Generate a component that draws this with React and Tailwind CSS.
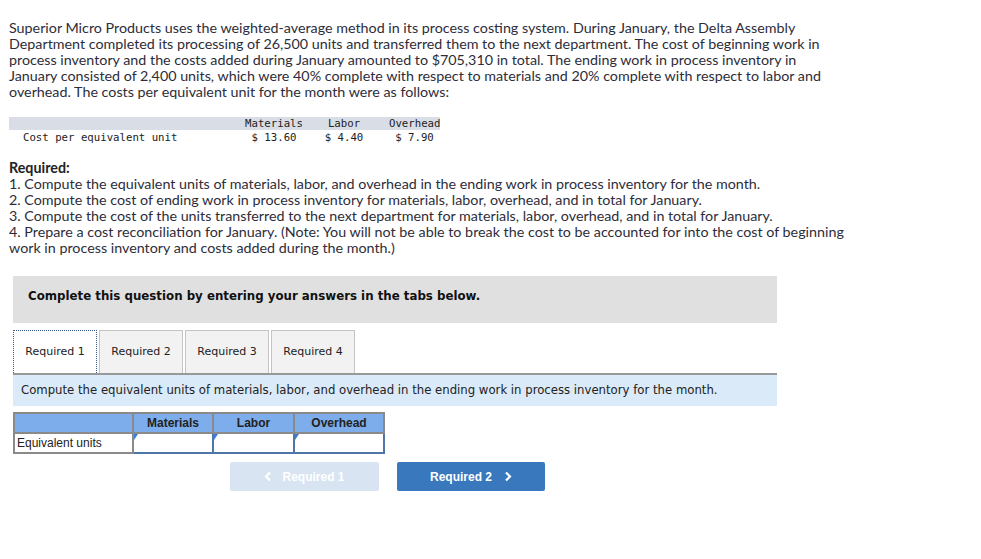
import React from "react";

const paraLines = [
  "Superior Micro Products uses the weighted-average method in its process costing system. During January, the Delta Assembly",
  "Department completed its processing of 26,500 units and transferred them to the next department. The cost of beginning work in",
  "process inventory and the costs added during January amounted to $705,310 in total. The ending work in process inventory in",
  "January consisted of 2,400 units, which were 40% complete with respect to materials and 20% complete with respect to labor and",
  "overhead. The costs per equivalent unit for the month were as follows:",
];

const reqLines = [
  "1. Compute the equivalent units of materials, labor, and overhead in the ending work in process inventory for the month.",
  "2. Compute the cost of ending work in process inventory for materials, labor, overhead, and in total for January.",
  "3. Compute the cost of the units transferred to the next department for materials, labor, overhead, and in total for January.",
  "4. Prepare a cost reconciliation for January. (Note: You will not be able to break the cost to be accounted for into the cost of beginning",
  "work in process inventory and costs added during the month.)",
];

const tabs = ["Required 1", "Required 2", "Required 3", "Required 4"];

const AnswerCell = () => (
  <td className="relative border-2 border-[#4d77a8] p-0 h-[20px] bg-white">
    {/* little blue marker in the corner */}
    <span className="absolute left-0 top-0 w-0 h-0 border-t-[6px] border-t-[#3b7dd8] border-r-[4px] border-r-transparent" />
  </td>
);

export default function App() {
  return (
    <div className="bg-white min-h-screen w-[981px] pt-[20px] pl-[9px] text-[#222]">
      <div className="text-[14.3px] leading-[16px] font-['Lato',sans-serif] text-[#2d2d3a] whitespace-nowrap">
        {paraLines.map((l) => (
          <div key={l}>{l}</div>
        ))}
      </div>

      {/* cost table */}
      <div className="mt-[17px] w-[431px] font-['DejaVu_Sans_Mono',monospace] text-[10.7px] text-[#222]">
        <div className="grid grid-cols-[228px_74px_66px_63px] bg-[#d9dde6] h-[13px] leading-[13px]">
          <span />
          <span className="text-center">Materials</span>
          <span className="text-center">Labor</span>
          <span className="text-center pl-[12px]">Overhead</span>
        </div>
        <div className="grid grid-cols-[228px_74px_66px_63px] h-[14px] leading-[15px]">
          <span className="pl-[14px]">Cost per equivalent unit</span>
          <span className="text-center">$ 13.60</span>
          <span className="text-center">$ 4.40</span>
          <span className="text-center pl-[12px]">$ 7.90</span>
        </div>
      </div>

      <div className="mt-[16px] text-[14.3px] leading-[16px] font-['Lato',sans-serif] text-[#2d2d3a] whitespace-nowrap">
        <div className="font-bold text-[#222]">Required:</div>
        {reqLines.map((r) => (
          <div key={r}>{r}</div>
        ))}
      </div>

      <div className="ml-[4px] w-[764px]">
        <div className="mt-[20px] h-[47px] bg-[#e0e0e0] flex items-center pl-[15px] pb-[6px] font-['DejaVu_Sans',sans-serif] font-bold text-[11.8px] text-[#111]">
          Complete this question by entering your answers in the tabs below.
        </div>

        <div className="mt-[7px] flex gap-[2px] h-[43px] font-['DejaVu_Sans',sans-serif] text-[11px] text-[#222]">
          {tabs.map((t, i) => (
            <div
              key={t}
              className={
                i === 0
                  ? "w-[84px] flex items-center justify-center bg-white border border-dotted border-[#3a5a8a] border-b-0"
                  : "w-[84px] flex items-center justify-center bg-[#f2f2f2] border border-[#c4c4c4] border-b-0"
              }
            >
              {t}
            </div>
          ))}
        </div>

        <div className="h-[33px] bg-[#dbeaf8] border-t-2 border-[#999] flex items-center pl-[8px] font-['DejaVu_Sans',sans-serif] text-[11.7px] text-[#222]">
          Compute the equivalent units of materials, labor, and overhead in the ending work in process inventory for the month.
        </div>

        <table className="mt-[6px] border-collapse font-['Liberation_Sans',sans-serif] text-[12px] text-[#222]">
          <thead>
            <tr className="bg-[#7dadea] h-[20px]">
              <th className="w-[119px] border-2 border-[#8a8a8a] p-0" />
              <th className="w-[80px] border-2 border-[#8a8a8a] font-bold text-center p-0">Materials</th>
              <th className="w-[81px] border-2 border-[#8a8a8a] font-bold text-center p-0">Labor</th>
              <th className="w-[90px] border-2 border-[#8a8a8a] font-bold text-center p-0">Overhead</th>
            </tr>
          </thead>
          <tbody>
            <tr className="h-[20px]">
              <td className="border-2 border-[#8a8a8a] px-[2px] py-0 text-left">Equivalent units</td>
              <AnswerCell />
              <AnswerCell />
              <AnswerCell />
            </tr>
          </tbody>
        </table>

        <div className="mt-[8px] flex gap-[18px] pl-[217px] font-['Liberation_Sans',sans-serif] font-bold text-[12px]">
          <button className="w-[149px] h-[29px] rounded-[2px] bg-[#d8e4f2] text-white flex items-center justify-center gap-[10px]">
            <svg width="8" height="11" viewBox="0 0 8 11" fill="none" stroke="white" strokeWidth="2.2">
              <path d="M6 1.5L2 5.5l4 4" />
            </svg>
            <span>Required 1</span>
          </button>
          <button className="w-[148px] h-[29px] rounded-[2px] bg-[#3a78bd] text-white flex items-center justify-center gap-[12px]">
            <span>Required 2</span>
            <svg width="8" height="11" viewBox="0 0 8 11" fill="none" stroke="white" strokeWidth="2.2">
              <path d="M2 1.5l4 4-4 4" />
            </svg>
          </button>
        </div>
      </div>
    </div>
  );
}
